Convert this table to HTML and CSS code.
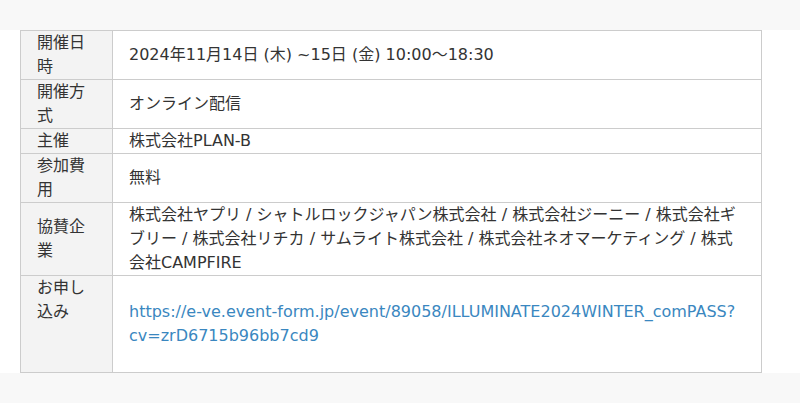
FILE: index.html
```html
<!DOCTYPE html>
<html lang="ja">
<head>
<meta charset="utf-8">
<link rel="stylesheet" href="styles.css">
</head>
<body>
<div class="band band-top"></div>
<div class="content">
<table class="info">
<tr><th>開催日時</th><td>2024年11月14日 (木) ~15日 (金) 10:00〜18:30</td></tr>
<tr class="tall"><th>開催方式</th><td>オンライン配信</td></tr>
<tr><th>主催</th><td>株式会社PLAN-B</td></tr>
<tr><th>参加費用</th><td>無料</td></tr>
<tr><th>協賛企業</th><td>株式会社ヤプリ / シャトルロックジャパン株式会社 / 株式会社ジーニー / 株式会社ギブリー / 株式会社リチカ / サムライト株式会社 / 株式会社ネオマーケティング / 株式会社CAMPFIRE</td></tr>
<tr class="last"><th>お申し込み</th><td><p class="link-p"><a href="#">https://e-ve.event-form.jp/event/89058/ILLUMINATE2024WINTER_comPASS?cv=zrD6715b96bb7cd9</a></p></td></tr>
</table>
</div>
<div class="band band-bottom"></div>
</body>
</html>
```
FILE: styles.css
```css
html, body {
  margin: 0;
  padding: 0;
  background: #fff;
  font-family: "DejaVu Sans", "Noto Sans CJK JP", sans-serif;
  font-size: 16px;
  line-height: 24px;
  color: #333;
}
.band {
  background: #f8f8f8;
}
.band-top {
  height: 30px;
}
.band-bottom {
  height: 40px;
}
.content {
  padding-left: 20px;
}
.info {
  border-collapse: collapse;
  width: 742px;
  table-layout: fixed;
}
.info th, .info td {
  border: 1px solid #cccccc;
  padding: 0 16px;
  text-align: left;
  vertical-align: middle;
  font-weight: normal;
  overflow-wrap: break-word;
}
.info th {
  width: 59px;
  background: #f3f3f3;
}
.info tr.tall td {
  height: 48px;
}
.info tr.last th {
  vertical-align: top;
}
.link-p {
  margin: 24px 0;
}
.link-p a {
  color: #3a87c0;
  text-decoration: none;
}
```
